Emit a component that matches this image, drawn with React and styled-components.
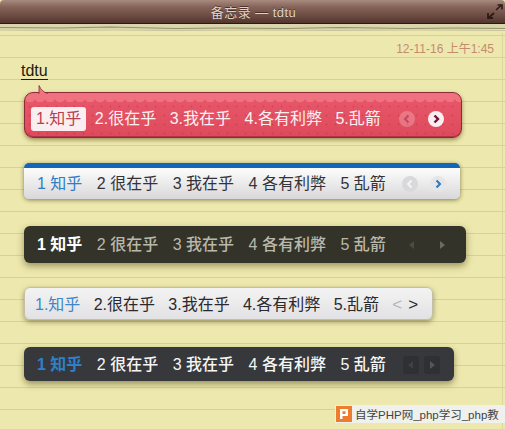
import React from 'react';
import styled, { createGlobalStyle } from 'styled-components';

const GlobalStyle = createGlobalStyle`
  html, body {
    margin: 0;
    padding: 0;
    width: 505px;
    height: 429px;
    overflow: hidden;
    background: #ede8ad;
  }
  * { box-sizing: border-box; }
`;

const FONT = `"Liberation Sans", "Noto Sans CJK SC", sans-serif`;

// --- window chrome ---

const Window = styled.div`
  position: relative;
  width: 505px;
  height: 429px;
  overflow: hidden;
  font-family: ${FONT};
`;

const TitleBar = styled.header`
  display: grid;
  grid-template-columns: 1fr auto 1fr;
  align-items: center;
  height: 24px;
  padding: 0 2px 1px 4px;
  border-radius: 4px 4px 0 0;
  border-bottom: 1px solid #2a1a16;
  background: linear-gradient(#a88a7e 0, #86645a 30%, #6b4a41 70%, #53352e 100%);
  color: #dcd3cb;
  font-size: 13px;
  letter-spacing: 0.45px;
`;

const TitleText = styled.span`
  grid-column: 2;
  text-shadow: 0 -1px 0 rgba(40, 20, 15, 0.6);
`;

const Expand = styled.svg`
  grid-column: 3;
  justify-self: end;
  display: block;
`;

const TornEdge = styled.svg`
  display: block;
  width: 505px;
  height: 9px;
`;

const Paper = styled.main`
  height: 396px;
  background-color: #ede8ad;
  background-image:
    linear-gradient(90deg, transparent 502px, #dcd7a0 502px, #dcd7a0 503px, transparent 503px),
    repeating-linear-gradient(
      transparent 0,
      transparent 13px,
      #d6d19b 13px,
      #d6d19b 14px,
      transparent 14px,
      transparent 22px
    );
  background-size: auto, 100% 22px;
  background-position: 0 0, 0 11px;
`;

const Stamp = styled.div`
  padding: 9px 11px 0 0;
  text-align: right;
  font-size: 12px;
  line-height: 15px;
  color: #c38c6d;
`;

const NoteTitle = styled.div`
  width: max-content;
  margin: 5px 0 0 21px;
  font-size: 16px;
  line-height: 17px;
  color: #1d1c10;
  border-bottom: 1px solid #1d1c10;
`;

// --- candidate bars ---

const tones = {
  red: {
    width: 438, height: 46, radius: 9, pad: 6, drop: 7, gap: 3.5, item: 5,
    text: '#fdf0f1',
    border: '1px solid #8e2b38',
    background: `
      radial-gradient(circle at 5px 0, #f0717f 5px, transparent 5.5px) 0 4px / 10px 5px repeat-x,
      linear-gradient(#f0717f, #f0717f) 0 0 / 100% 5px no-repeat,
      radial-gradient(circle, rgba(170, 35, 55, 0.3) 0.8px, transparent 1.2px) 0 0 / 9px 9px,
      linear-gradient(#e9596b, #dd4a5c)
    `,
    shadow: '0 2px 4px rgba(90, 70, 20, 0.55), inset 0 -1px 0 rgba(130, 30, 45, 0.5)',
  },
  blue: {
    width: 436, height: 36, radius: 5, pad: 13, drop: 1, gap: 14.5, item: 0,
    text: '#333338',
    border: 'none',
    borderTop: '5px solid #1267b8',
    background: 'linear-gradient(#fdfdfd, #d8d8da)',
    shadow: '0 1px 4px rgba(60, 50, 20, 0.6)',
  },
  dark: {
    width: 442, height: 37, radius: 6, pad: 13, drop: 1, gap: 14.5, item: 0,
    text: '#b9b8a9',
    weight: 500,
    border: 'none',
    background: '#33332a',
    shadow: '0 3px 7px rgba(70, 60, 20, 0.5)',
  },
  light: {
    width: 409, height: 33, radius: 6, pad: 10, drop: 2, gap: 13.3, item: 0,
    text: '#29292e',
    border: '1px solid #c2c0a6',
    background: 'linear-gradient(#f3f3f4, #e2e2e4)',
    shadow: '0 2px 5px rgba(70, 60, 20, 0.5)',
  },
  slate: {
    width: 430, height: 34, radius: 6, pad: 13, drop: 1, gap: 14.5, item: 0,
    text: '#f5f5f5',
    weight: 500,
    border: 'none',
    background: '#37383b',
    shadow: '0 3px 6px rgba(70, 60, 20, 0.5)',
  },
};

const activeStyles = {
  red: 'color: #b8404f; background: #fbeef0; border-radius: 3px;',
  blue: 'color: #2f7cc4;',
  dark: 'color: #ffffff; font-weight: 700;',
  light: 'color: #3d86c9;',
  slate: 'color: #2f80c8; font-weight: 700;',
};

const Bar = styled.section`
  position: relative;
  display: flex;
  align-items: center;
  width: ${p => tones[p.$tone].width}px;
  height: ${p => tones[p.$tone].height}px;
  margin: ${p => p.$top}px 0 0 24px;
  padding-top: ${p => tones[p.$tone].drop}px;
  padding-left: ${p => tones[p.$tone].pad}px;
  gap: ${p => tones[p.$tone].gap}px;
  border: ${p => tones[p.$tone].border};
  ${p => tones[p.$tone].borderTop ? `border-top: ${tones[p.$tone].borderTop};` : ''}
  border-radius: ${p => tones[p.$tone].radius}px;
  background: ${p => tones[p.$tone].background};
  box-shadow: ${p => tones[p.$tone].shadow};
  color: ${p => tones[p.$tone].text};
  font-size: 16px;
  font-weight: ${p => tones[p.$tone].weight || 400};
`;

const Tail = styled.svg`
  position: absolute;
  left: 13px;
  top: -8px;
  display: block;
`;

const Candidate = styled.span`
  display: block;
  flex: none;
  padding: 0 ${p => tones[p.$tone].item}px;
  line-height: 24px;
  white-space: pre;
  ${p => p.$active && activeStyles[p.$tone]}
`;

const Nav = styled.div`
  display: flex;
  flex: none;
  align-items: center;
  margin-left: ${p => p.$left}px;
  gap: ${p => p.$gap}px;
`;

const RoundBtn = styled.span`
  display: flex;
  align-items: center;
  justify-content: center;
  width: 16px;
  height: 16px;
  border-radius: 50%;
  background: ${p => p.$bg};
`;

const SquareBtn = styled.span`
  display: flex;
  align-items: center;
  justify-content: center;
  width: 16px;
  height: 18px;
  border-radius: 3px;
  background: ${p => p.$bg || 'transparent'};
`;

const Angle = styled.span`
  font-size: 17px;
  line-height: 20px;
  color: ${p => p.$color};
`;

const Chevron = ({ dir, color, w = 2 }) => (
  <svg width="10" height="10" viewBox="0 0 10 10" fill="none">
    <path
      d={dir === 'left' ? 'M6.5 1.500 3 5l3.500 3.500' : 'M3.500 1.500 7 5 3.500 8.500'}
      stroke={color}
      strokeWidth={w}
    />
  </svg>
);

const Triangle = ({ dir, color }) => (
  <svg width="10" height="12" viewBox="0 0 10 12">
    <path d={dir === 'left' ? 'M7 2v8L2 6z' : 'M3 2v8l5-4z'} fill={color} />
  </svg>
);

// --- watermark ---

const Watermark = styled.aside`
  position: absolute;
  left: 335px;
  top: 405px;
  display: flex;
  align-items: center;
  gap: 3px;
  width: 170px;
  height: 18px;
  padding-left: 1px;
  overflow: hidden;
  background: #f0f0ec;
  font-size: 11.5px;
  color: #444;
  white-space: nowrap;
`;

const LogoBox = styled.svg`
  display: block;
  flex: none;
`;

const labels = (sep) => [
  `1${sep}知乎`,
  `2${sep}很在乎`,
  `3${sep}我在乎`,
  `4${sep}各有利弊`,
  `5${sep}乱箭`,
];

const Candidates = ({ tone, sep }) =>
  labels(sep).map((text, i) => (
    <Candidate key={text} $tone={tone} $active={i === 0}>{text}</Candidate>
  ));

function App() {
  return (
    <Window>
      <GlobalStyle />
      <TitleBar>
        <TitleText>备忘录 — tdtu</TitleText>
        <Expand width="16" height="15" viewBox="0 0 16 15" fill="none">
          <path d="M9 6l5-4.500M10.500 1H15v4.500" stroke="#2c1c18" strokeWidth="1.600" />
          <path d="M7 9l-5 4.500M1 9v5h5" stroke="#2c1c18" strokeWidth="1.800" />
        </Expand>
      </TitleBar>
      <TornEdge viewBox="0 0 505 9" preserveAspectRatio="none">
        <rect width="505" height="9" fill="#ede8ad" />
        <path
          d="M0 0h505v5l-40 1-50-1-60 1.500-55-1-40 .5-45-.5-40 1-60-1.500-50 1-65-.5z"
          fill="#d9d5ad"
        />
        <path
          d="M0 3.500l60 .5 50-1 65 1.500 50-.5 60 .5 55-1 70 1 45-.5 50 .5"
          stroke="#94906c"
          strokeWidth="1.200"
          fill="none"
        />
        <path
          d="M0 6l45 .5 70-.5 60 .5 80-.5 75 .5 90-.5 85 .5"
          stroke="#c9c49a"
          strokeWidth="1"
          fill="none"
        />
      </TornEdge>
      <Paper>
        <Stamp>12-11-16 上午1:45</Stamp>
        <NoteTitle>tdtu</NoteTitle>

        <Bar $tone="red" $top={12}>
          <Tail width="10" height="9" viewBox="0 0 10 9">
            <path d="M1 0.500V9h9C6 8 3 5 1 0.500z" fill="#ef7482" />
            <path d="M1 9V0.500C3 5 6 7.500 10 8.500" fill="none" stroke="#8e2b38" strokeWidth="0.800" />
          </Tail>
          <Candidates tone="red" sep="." />
          <Nav $left={10} $gap={13}>
            <RoundBtn $bg="rgba(255, 255, 255, 0.22)">
              <Chevron dir="left" color="#c8475a" />
            </RoundBtn>
            <RoundBtn $bg="#fbeef0">
              <Chevron dir="right" color="#6e1533" w={2.400} />
            </RoundBtn>
          </Nav>
        </Bar>

        <Bar $tone="blue" $top={25}>
          <Candidates tone="blue" sep=" " />
          <Nav $left={2} $gap={12}>
            <RoundBtn $bg="#d9d9db">
              <Chevron dir="left" color="#f4f4f4" />
            </RoundBtn>
            <RoundBtn $bg="#e6e6e8">
              <Chevron dir="right" color="#2a78bd" />
            </RoundBtn>
          </Nav>
        </Bar>

        <Bar $tone="dark" $top={27}>
          <Candidates tone="dark" sep=" " />
          <Nav $left={4} $gap={14}>
            <SquareBtn>
              <Triangle dir="left" color="#4c4c42" />
            </SquareBtn>
            <SquareBtn>
              <Triangle dir="right" color="#6b6b60" />
            </SquareBtn>
          </Nav>
        </Bar>

        <Bar $tone="light" $top={24}>
          <Candidates tone="light" sep="." />
          <Nav $left={0} $gap={6}>
            <Angle $color="#b5b5b8">&lt;</Angle>
            <Angle $color="#29292e">&gt;</Angle>
          </Nav>
        </Bar>

        <Bar $tone="slate" $top={27}>
          <Candidates tone="slate" sep=" " />
          <Nav $left={3} $gap={5}>
            <SquareBtn $bg="#2f3033">
              <Triangle dir="left" color="#3f4043" />
            </SquareBtn>
            <SquareBtn $bg="#2f3033">
              <Triangle dir="right" color="#55565a" />
            </SquareBtn>
          </Nav>
        </Bar>
      </Paper>
      <Watermark>
        <LogoBox width="16" height="16" viewBox="0 0 16 16">
          <rect width="16" height="16" fill="#ee7b2e" />
          <path d="M4 3h8v7H6.500v3H4zM6.500 5.200V8h3V5.200z" fill="#fff" fillRule="evenodd" />
        </LogoBox>
        自学PHP网_php学习_php教
      </Watermark>
    </Window>
  );
}

export default App;
